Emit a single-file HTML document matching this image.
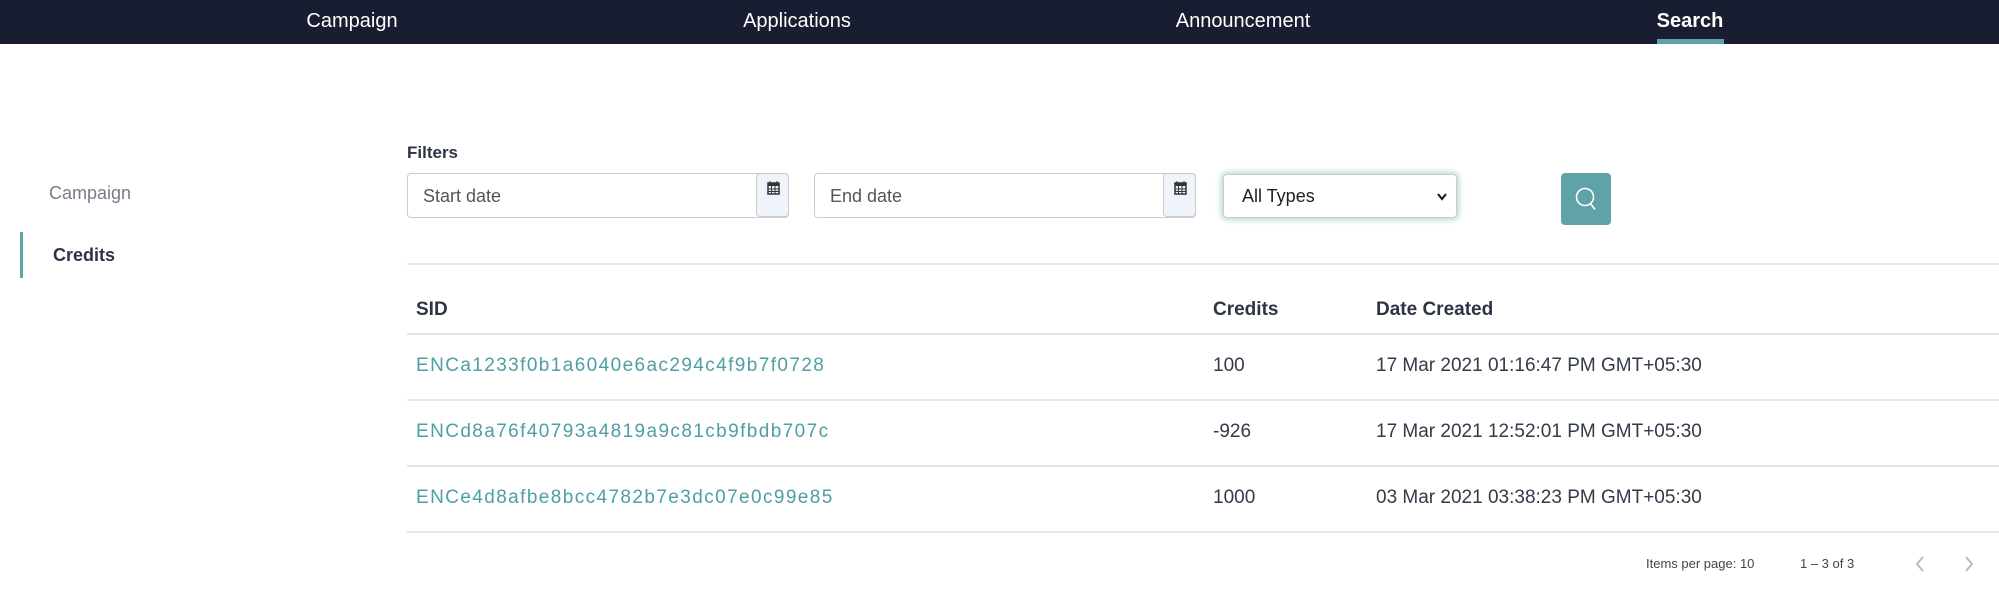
<!DOCTYPE html>
<html><head><style>
*{margin:0;padding:0;box-sizing:border-box}
body{width:1999px;height:607px;background:#fff;font-family:"Liberation Sans",Arial,sans-serif;position:relative;overflow:hidden;color:#2d3446}
.abs{position:absolute;white-space:nowrap}
.nav{position:absolute;left:0;top:0;width:1999px;height:44px;background:#181d31}
.nav span{position:absolute;top:10px;color:#fff;font-size:20px;transform:translateX(-50%)}
.inp{position:absolute;border:1px solid #ccc;border-radius:4px;background:#fff;height:45px;top:173px}
.inp span{position:absolute;left:15px;top:12px;font-size:18px;color:#555}
.cal{position:absolute;right:-1px;top:-1px;width:33px;height:44px;background:#eef4fa;border:1px solid #ccc;border-radius:4px}
.row{position:absolute;left:407px;width:1592px;height:2px;background:#e6e6e6}
.td{position:absolute;font-size:19px;color:#333a48;white-space:nowrap}
.sid{color:#4f9ea3;letter-spacing:1.4px}
</style></head><body>
<div class="nav">
<span style="left:352px">Campaign</span>
<span style="left:797px">Applications</span>
<span style="left:1243px">Announcement</span>
<span style="left:1690px;font-weight:bold">Search</span>
<div style="position:absolute;left:1657px;top:39px;width:67px;height:5px;background:#5fa3a8"></div>
</div>

<div class="abs" style="left:49px;top:183px;font-size:18px;color:#767c88">Campaign</div>
<div style="position:absolute;left:20px;top:232px;width:3px;height:46px;background:#5fa3a8"></div>
<div class="abs" style="left:53px;top:245px;font-size:18px;font-weight:bold;color:#2d3446">Credits</div>

<div class="abs" style="left:407px;top:143px;font-size:17px;font-weight:bold">Filters</div>
<div class="inp" style="left:407px;width:382px"><span>Start date</span><div class="cal">
<svg width="33" height="30" viewBox="0 0 33 30"><rect x="11" y="9" width="11" height="11" fill="none" stroke="#333" stroke-width="1.5"/><rect x="11" y="9" width="11" height="3" fill="#333"/><path d="M13 7v3M20 7v3M11 15h11M11 17.5h11M14.5 12v8M18 12v8" stroke="#333" stroke-width="1"/></svg></div></div>
<div class="inp" style="left:814px;width:382px"><span>End date</span><div class="cal">
<svg width="33" height="30" viewBox="0 0 33 30"><rect x="11" y="9" width="11" height="11" fill="none" stroke="#333" stroke-width="1.5"/><rect x="11" y="9" width="11" height="3" fill="#333"/><path d="M13 7v3M20 7v3M11 15h11M11 17.5h11M14.5 12v8M18 12v8" stroke="#333" stroke-width="1"/></svg></div></div>
<div style="position:absolute;left:1223px;top:174px;width:234px;height:44px;border:1px solid #ccc;border-radius:4px;box-shadow:0 0 6px 2px rgba(95,163,168,.45)">
<span class="abs" style="left:18px;top:11px;font-size:18px;color:#222">All Types</span>
<svg class="abs" style="left:212px;top:17px" width="12" height="10" viewBox="0 0 12 10"><path d="M2 2l4 5 4-5" fill="none" stroke="#222" stroke-width="2.2"/></svg>
</div>
<div style="position:absolute;left:1561px;top:173px;width:50px;height:52px;background:#5fa3a8;border-radius:4px">
<svg width="50" height="52" viewBox="0 0 50 52"><circle cx="24" cy="24" r="8.5" fill="none" stroke="#fff" stroke-width="1.6"/><path d="M29.5 30.5l4.5 6" stroke="#fff" stroke-width="1.6"/></svg></div>

<div class="row" style="top:263px"></div>
<div class="td" style="left:416px;top:299px;font-weight:bold;color:#2d3446">SID</div>
<div class="td" style="left:1213px;top:299px;font-weight:bold;color:#2d3446">Credits</div>
<div class="td" style="left:1376px;top:299px;font-weight:bold;color:#2d3446">Date Created</div>
<div class="row" style="top:333px"></div>
<div class="td sid" style="left:416px;top:355px">ENCa1233f0b1a6040e6ac294c4f9b7f0728</div>
<div class="td" style="left:1213px;top:355px">100</div>
<div class="td" style="left:1376px;top:355px">17 Mar 2021 01:16:47 PM GMT+05:30</div>
<div class="row" style="top:399px"></div>
<div class="td sid" style="left:416px;top:421px">ENCd8a76f40793a4819a9c81cb9fbdb707c</div>
<div class="td" style="left:1213px;top:421px">-926</div>
<div class="td" style="left:1376px;top:421px">17 Mar 2021 12:52:01 PM GMT+05:30</div>
<div class="row" style="top:465px"></div>
<div class="td sid" style="left:416px;top:487px">ENCe4d8afbe8bcc4782b7e3dc07e0c99e85</div>
<div class="td" style="left:1213px;top:487px">1000</div>
<div class="td" style="left:1376px;top:487px">03 Mar 2021 03:38:23 PM GMT+05:30</div>
<div class="row" style="top:531px"></div>

<div class="abs" style="left:1646px;top:556px;font-size:13px;color:#444">Items per page: 10</div>
<div class="abs" style="left:1800px;top:556px;font-size:13px;color:#444">1 – 3 of 3</div>
<svg class="abs" style="left:1912px;top:553px" width="70" height="22" viewBox="0 0 70 22"><path d="M11 4l-6 7 6 7M54 4l6 7-6 7" fill="none" stroke="#bbb" stroke-width="2"/></svg>
</body></html>
